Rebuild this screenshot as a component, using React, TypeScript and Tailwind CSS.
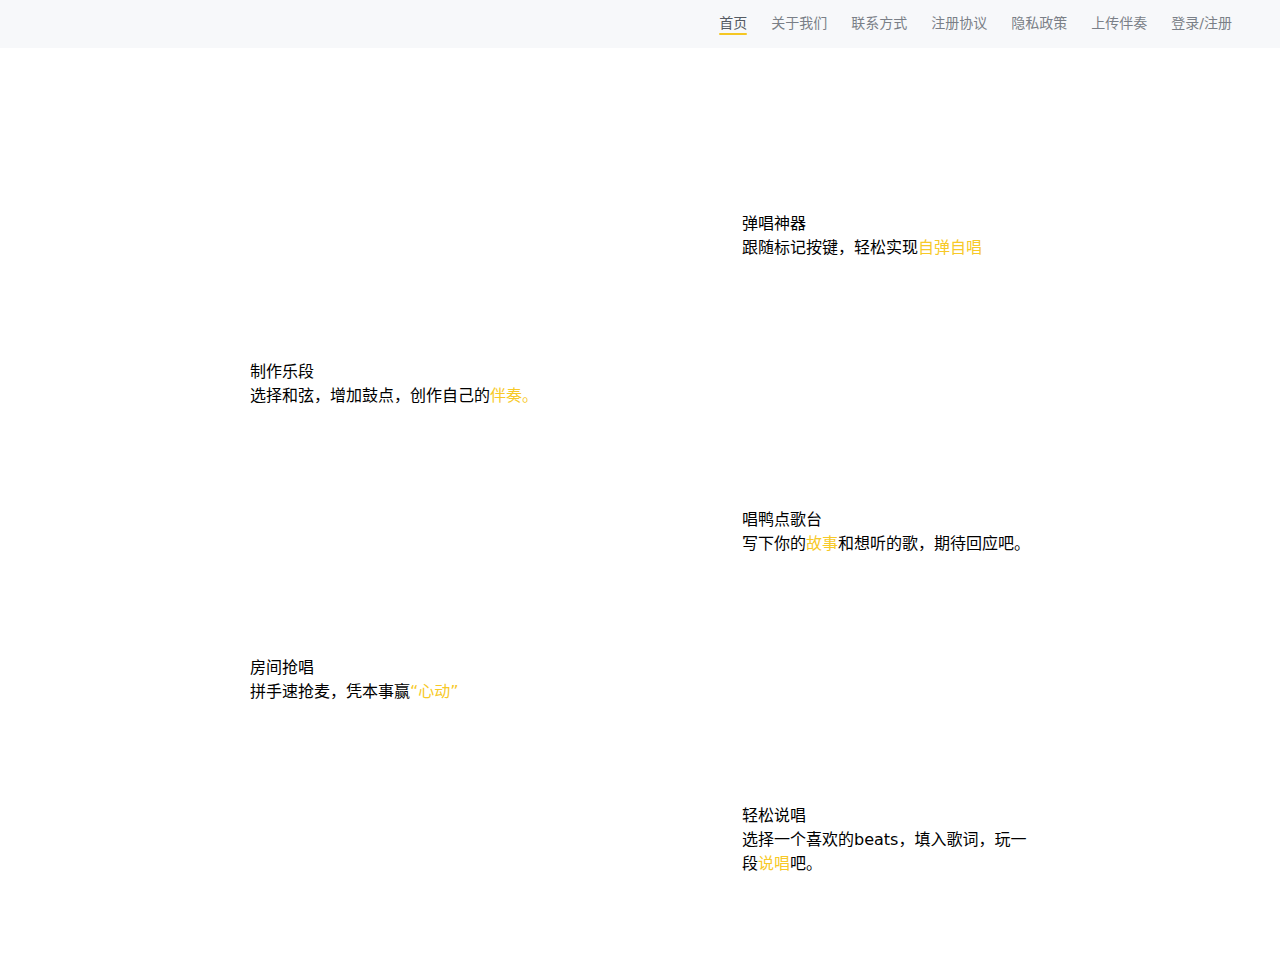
import React from "react";

const navItems = ["首页", "关于我们", "联系方式", "注册协议", "隐私政策", "上传伴奏", "登录/注册"];

type Feature = {
  title: string;
  parts: { text: string; hl?: boolean }[];
  side: "left" | "right";
};

const features: Feature[] = [
  {
    title: "弹唱神器",
    parts: [{ text: "跟随标记按键，轻松实现" }, { text: "自弹自唱", hl: true }],
    side: "right",
  },
  {
    title: "制作乐段",
    parts: [{ text: "选择和弦，增加鼓点，创作自己的" }, { text: "伴奏。", hl: true }],
    side: "left",
  },
  {
    title: "唱鸭点歌台",
    parts: [{ text: "写下你的" }, { text: "故事", hl: true }, { text: "和想听的歌，期待回应吧。" }],
    side: "right",
  },
  {
    title: "房间抢唱",
    parts: [{ text: "拼手速抢麦，凭本事赢" }, { text: "“心动”", hl: true }],
    side: "left",
  },
  {
    title: "轻松说唱",
    parts: [{ text: "选择一个喜欢的beats，填入歌词，玩一段" }, { text: "说唱", hl: true }, { text: "吧。" }],
    side: "right",
  },
];

export default function App() {
  return (
    <div className="min-h-screen bg-white font-['DejaVu_Sans','Noto_Sans_CJK_SC',sans-serif]">
      {/* Header */}
      <header className="h-12 bg-[#f7f8fa] flex items-center justify-end pr-12">
        <nav className="flex gap-6 text-sm text-[#7a7f87] -mt-[2px]">
          {navItems.map((item, i) => (
            <a
              key={item}
              className={`relative leading-[22px] ${i === 0 ? "text-[#555b63]" : ""}`}
            >
              {item}
              {i === 0 && (
                <span className="absolute left-0 right-0 -bottom-[1px] h-[2px] bg-[#f5c723] rounded" />
              )}
            </a>
          ))}
        </nav>
      </header>

      {/* Features */}
      <main className="w-[780px] mx-auto pt-[164px]">
        {features.map((f) => (
          <section key={f.title} className="h-[148px] flex">
            <div
              className={`w-[298px] shrink-0 text-base leading-6 text-black ${
                f.side === "right" ? "ml-[492px]" : ""
              }`}
            >
              <p>{f.title}</p>
              <p>
                {f.parts.map((p, i) => (
                  <span key={i} className={p.hl ? "text-[#f7c928]" : ""}>
                    {p.text}
                  </span>
                ))}
              </p>
            </div>
          </section>
        ))}
      </main>
    </div>
  );
}
